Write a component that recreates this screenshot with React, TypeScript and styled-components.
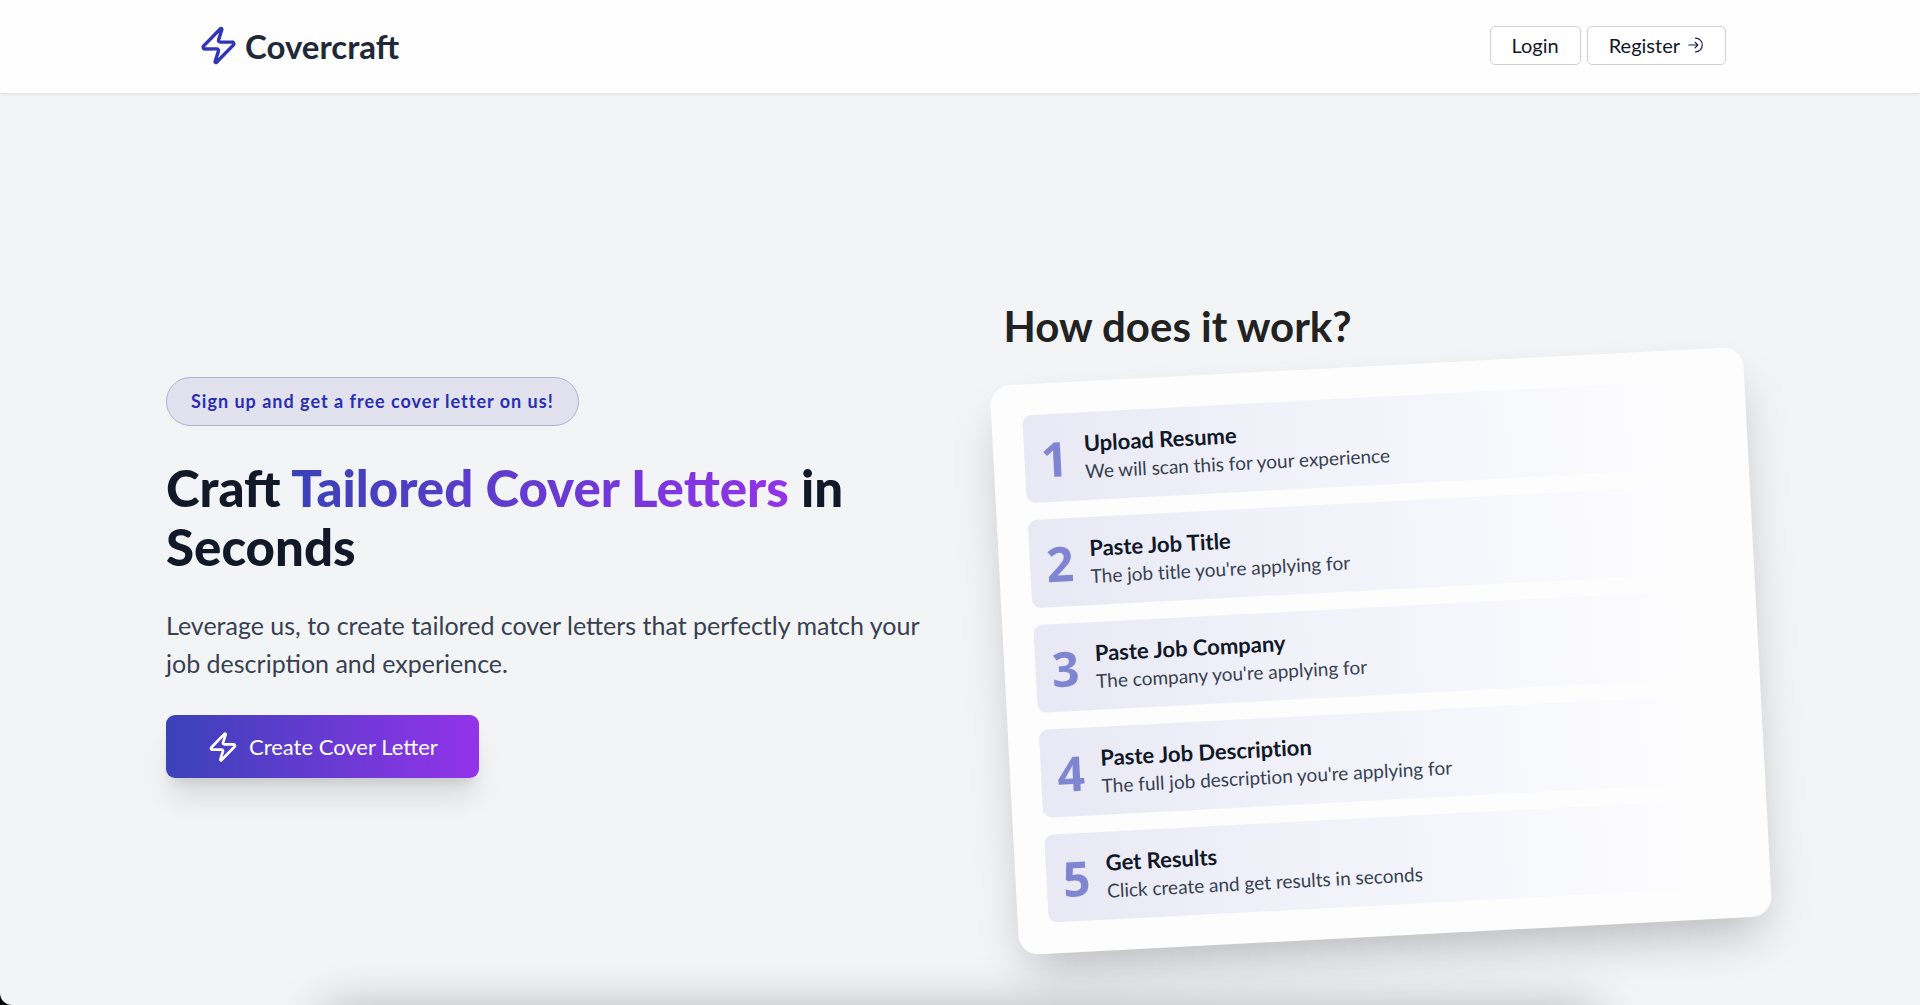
import React from "react";
import styled, { createGlobalStyle } from "styled-components";
import { Zap } from "lucide-react";

const primary = "#3a42b8";
const violet = "#9333ea";

const GlobalStyle = createGlobalStyle`
  *, *::before, *::after { box-sizing: border-box; }
  body {
    margin: 0;
    background: #000;
    color: #111827;
    font-family: Lato, "Open Sans", sans-serif;
    font-size: 20px;
  }
  h1, h2, h3, p, ol { margin: 0; padding: 0; }
`;

const Page = styled.div`
  height: 100vh;
  overflow: hidden;
  background: #f3f4f6;
  border-bottom-left-radius: 12px;
`;

const Header = styled.header`
  display: flex;
  align-items: center;
  justify-content: space-between;
  height: 93px;
  padding: 0 194px 2px 198px;
  background: #fefefe;
  box-shadow: 0 1px 3px rgba(0, 0, 0, 0.1);
`;

const Brand = styled.a`
  display: flex;
  align-items: center;
  gap: 6px;
  color: #1f2937;
  font-size: 33px;
  font-weight: 700;
  line-height: 40px;
  text-decoration: none;

  svg { color: #3035b8; }
`;

const Nav = styled.nav`
  display: flex;
  gap: 6px;
`;

const NavButton = styled.button`
  display: flex;
  align-items: center;
  gap: 8px;
  height: 39px;
  padding: 0 21px 2px;
  border: 1px solid #cfd1d6;
  border-radius: 5px;
  background: #fff;
  color: #111827;
  font: inherit;
  font-size: 20px;
`;

const Hero = styled.main`
  display: grid;
  grid-template-columns: 1fr 1fr;
  align-items: start;
  gap: 84px;
  padding: 206px 163px 0 166px;
`;

const Pitch = styled.section`
  display: flex;
  flex-direction: column;
  align-items: flex-start;
  padding-top: 78px;
`;

const Offer = styled.p`
  padding: 0 24px;
  border: 1px solid #acaede;
  border-radius: 25px;
  background: #e1e2ee;
  color: #2a2fb0;
  font-size: 18px;
  font-weight: 700;
  line-height: 47px;
  letter-spacing: 1px;
`;

const Title = styled.h1`
  margin-top: 32px;
  font-size: 51px;
  font-weight: 900;
  line-height: 59px;
`;

const Accent = styled.span`
  background: linear-gradient(to right, ${primary}, ${violet});
  background-clip: text;
  -webkit-background-clip: text;
  color: transparent;
`;

const Lead = styled.p`
  margin-top: 30px;
  color: #374151;
  font-size: 25px;
  line-height: 38px;
`;

const CreateButton = styled.button`
  display: flex;
  align-items: center;
  gap: 10px;
  height: 63px;
  margin-top: 33px;
  padding: 0 41px;
  border: 0;
  border-radius: 9px;
  background: linear-gradient(to right, ${primary}, ${violet});
  box-shadow: 0 25px 30px -5px rgba(0, 0, 0, 0.1), 0 10px 12px -6px rgba(0, 0, 0, 0.1);
  color: #fff;
  font: inherit;
  font-size: 22px;
`;

const GuideTitle = styled.h2`
  color: #222;
  font-size: 42px;
  font-weight: 700;
  line-height: 54px;
`;

const Card = styled.ol`
  display: grid;
  gap: 17px;
  margin-top: 13px;
  padding: 31px;
  border-radius: 20px;
  background: #fdfdfe;
  box-shadow: 0 25px 50px -12px rgba(0, 0, 0, 0.25);
  font-variant-ligatures: none;
  list-style: none;
  transform: rotate(-3deg);
`;

const Step = styled.li`
  display: flex;
  align-items: center;
  gap: 16px;
  height: 88px;
  padding: 2px 16px 0;
  border-radius: 9px;
  background: linear-gradient(to right, #e9e9f5, #f3f4fb 50%, #fdfdfe 95%);
`;

const StepNumber = styled.span`
  width: 28px;
  color: #8085d2;
  font-family: "Open Sans", sans-serif;
  font-size: 48px;
  font-weight: 700;
  line-height: 64px;
  text-align: center;
`;

const StepTitle = styled.h3`
  font-size: 22px;
  font-weight: 700;
  line-height: 28px;
`;

const StepText = styled.p`
  color: #374151;
  font-size: 19px;
  line-height: 28px;
`;

const Preview = styled.section`
  height: 600px;
  max-width: 1280px;
  margin: 74px auto 0;
  border-radius: 20px;
  background: #fff;
  box-shadow: 0 0 50px rgba(0, 0, 0, 0.28);
`;

const steps = [
  { title: "Upload Resume", text: "We will scan this for your experience" },
  { title: "Paste Job Title", text: "The job title you're applying for" },
  { title: "Paste Job Company", text: "The company you're applying for" },
  { title: "Paste Job Description", text: "The full job description you're applying for" },
  { title: "Get Results", text: "Click create and get results in seconds" },
];

function EnterIcon() {
  return (
    <svg width="16" height="16" viewBox="0 0 16 16" fill="none" stroke="#1c1c5c" strokeWidth="1.2" strokeLinecap="round" strokeLinejoin="round" aria-hidden="true">
      <path d="M7.5 1.2a6.8 6.8 0 0 1 0 13.6M0.8 8h8.8M7 5.2L9.8 8L7 10.8" />
    </svg>
  );
}

export default function App() {
  return (
    <>
      <GlobalStyle />
      <Page>
        <Header>
          <Brand href="#">
            <Zap size={41} aria-hidden="true" />
            Covercraft
          </Brand>
          <Nav>
            <NavButton type="button">Login</NavButton>
            <NavButton type="button">
              Register
              <EnterIcon />
            </NavButton>
          </Nav>
        </Header>
        <Hero>
          <Pitch>
            <Offer>Sign up and get a free cover letter on us!</Offer>
            <Title>
              Craft <Accent>Tailored Cover Letters</Accent> in Seconds
            </Title>
            <Lead>
              Leverage us, to create tailored cover letters that perfectly match your job
              description and experience.
            </Lead>
            <CreateButton type="button">
              <Zap size={32} aria-hidden="true" />
              Create Cover Letter
            </CreateButton>
          </Pitch>
          <section>
            <GuideTitle>How does it work?</GuideTitle>
            <Card>
              {steps.map((step, index) => (
                <Step key={step.title}>
                  <StepNumber>{index + 1}</StepNumber>
                  <div>
                    <StepTitle>{step.title}</StepTitle>
                    <StepText>{step.text}</StepText>
                  </div>
                </Step>
              ))}
            </Card>
          </section>
        </Hero>
        <Preview />
      </Page>
    </>
  );
}
